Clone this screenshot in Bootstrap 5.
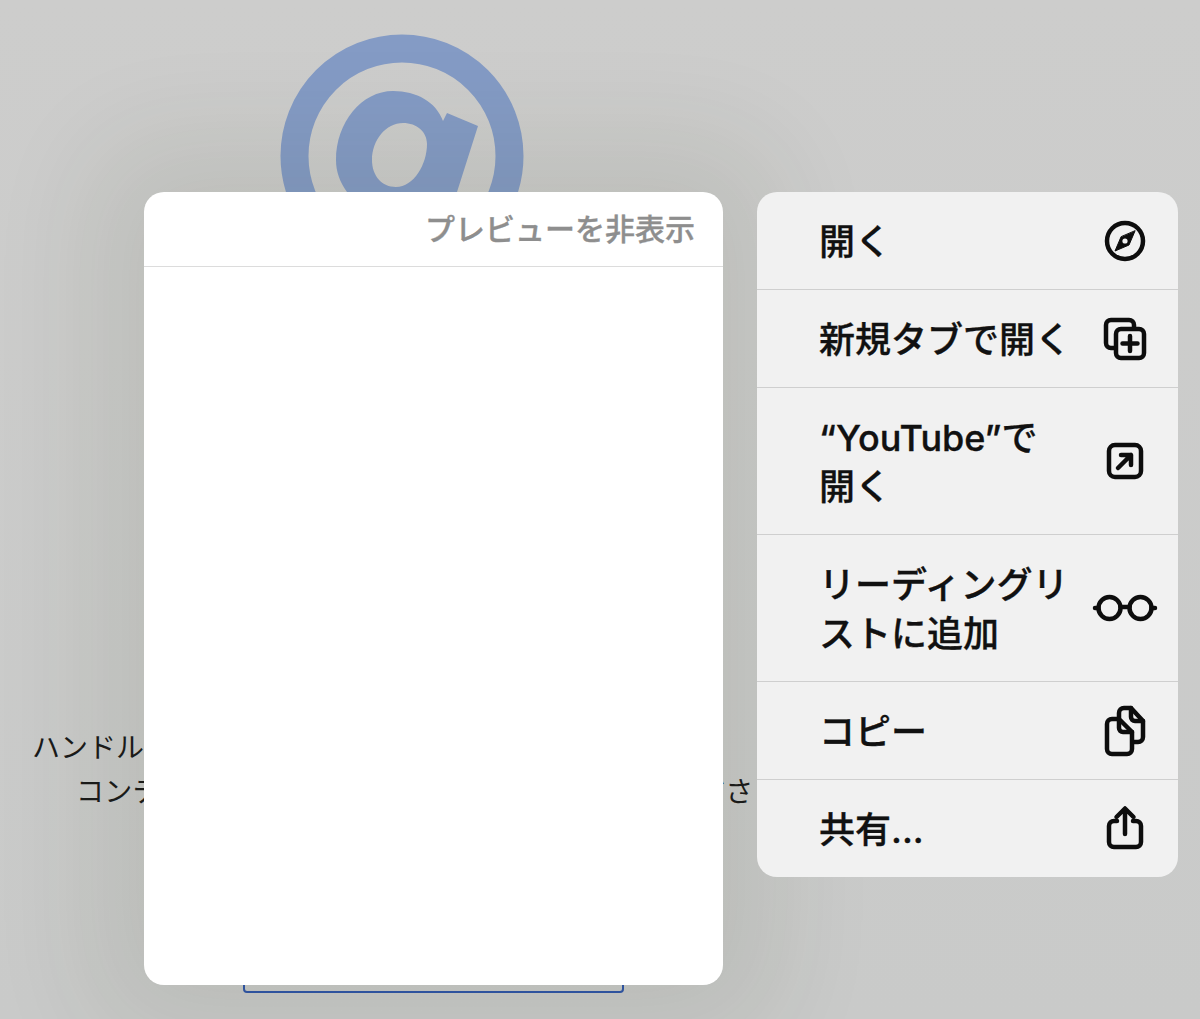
<!DOCTYPE html>
<html lang="ja">
<head>
<meta charset="utf-8">
<link href="https://cdn.jsdelivr.net/npm/bootstrap@5.3.0/dist/css/bootstrap.min.css" rel="stylesheet">
<style>
html,body{margin:0;height:100%;overflow:hidden}
body{font-family:"Noto Sans CJK JP","Liberation Sans",sans-serif;color:#111;background:#cbcbca}
.stage{position:relative;width:1200px;height:1019px;overflow:hidden;background:linear-gradient(#cdcdcc,#c9cac9)}
.at-mark{display:block;margin:34px 0 0 280px}
.bg-copy{position:absolute;left:0;top:724px;width:100%;font-size:28px;line-height:44px;color:#1a1a1a;white-space:nowrap}
.bg-copy div:first-child{padding-left:32px}
.bg-copy div:last-child{padding-left:76px;letter-spacing:.3px}
.field-line{position:absolute;left:243px;top:960px;width:381px;height:33px;border:2px solid #2f55a8;border-radius:4px}
.preview{position:absolute;left:144px;top:192px;width:579px;height:793px;border:0;border-radius:20px;background:#fff;box-shadow:0 0 110px 50px rgba(40,50,20,.09)}
.preview-head{height:75px;padding:0 28px 3px 0;font-size:30px;font-weight:500;-webkit-text-stroke:.35px #8e8e8e;color:#8e8e8e;border-bottom:1px solid #dcdcdc;background:transparent}
.action-menu{position:absolute;left:757px;top:192px;width:421px;border-radius:20px;background:#f1f1f1;overflow:hidden}
.action-menu .list-group-item{position:relative;background:transparent;border:0;border-bottom:1px solid #cfcfcf;color:#111;padding:3px 0 0 62px;display:flex;align-items:center;font-family:Inter,"Noto Sans CJK JP",sans-serif;font-size:36px;line-height:49px;font-weight:500;-webkit-text-stroke:.35px #111}
.action-menu .list-group-item:last-child{border-bottom:0;height:97px}
.row-one{height:98px}
.row-two{height:147px}
.row-label{width:256px}
.row-icon{position:absolute;right:23px;width:60px;display:flex;justify-content:center;top:50%;transform:translateY(-50%)}
.action-menu svg{fill:none;stroke:#0d0d0d;stroke-width:4.500;stroke-linecap:round;stroke-linejoin:round;display:block;overflow:visible}
</style>
</head>
<body>
<div class="stage">
 <svg class="at-mark" width="244" height="158" viewBox="0 0 244 158">
  <circle cx="122" cy="122" r="107.500" fill="none" stroke="#849bc5" stroke-width="28"/>
  <path fill="#849bc5" fill-rule="evenodd" d="M67 158C60 148 56 138 56 126C56 88 82 57 113 57C137 57 156 68 163 87L167 79L198 92L177 158ZM123 89C137 89 147 98 147 110C147 130 134 153 116 153C102 153 92 142 92 126C92 106 106 89 123 89Z"/>
 </svg>
 <div class="bg-copy">
  <div>ハンドルを選択してチャンネルを作成するか、</div>
  <div>コンテンツを投稿するにはハンドルを作成してくださ</div>
 </div>
 <div class="field-line"></div>

 <div class="card preview">
  <div class="card-header preview-head d-flex align-items-center justify-content-end">プレビューを非表示</div>
 </div>

 <div class="list-group action-menu">
  <div class="list-group-item row-one"><span class="row-label">開く</span><span class="row-icon">
   <svg width="42" height="42" viewBox="0 0 42 42"><circle cx="21" cy="21" r="18"/><path fill="#0d0d0d" stroke-width="1" d="M31 11L25 25L11 31L17 17Z"/><circle cx="21" cy="21" r="2.600" fill="#f1f1f1" stroke="none"/></svg></span></div>
  <div class="list-group-item row-one"><span class="row-label">新規タブで開く</span><span class="row-icon">
   <svg width="42" height="42" viewBox="0 0 42 42"><path d="M10 30H7a5 5 0 0 1-5-5V7a5 5 0 0 1 5-5h18a5 5 0 0 1 5 5v3"/><rect x="12" y="11" width="28" height="29" rx="5"/><path d="M26 18v15M18.500 25.500h15"/></svg></span></div>
  <div class="list-group-item row-two"><span class="row-label">“YouTube”で<br>開く</span><span class="row-icon">
   <svg width="36" height="36" viewBox="0 0 36 36"><rect x="2" y="2" width="32" height="32" rx="6"/><path d="M11 25L24 12M14 12H24V22"/></svg></span></div>
  <div class="list-group-item row-two"><span class="row-label">リーディングリ<br>ストに追加</span><span class="row-icon">
   <svg width="64" height="28" viewBox="0 0 64 28"><circle cx="16.500" cy="14" r="11"/><circle cx="47.500" cy="14" r="11"/><path d="M27.500 13h9M2 14h3.500M58.500 14h3.500"/></svg></span></div>
  <div class="list-group-item row-one"><span class="row-label">コピー</span><span class="row-icon">
   <svg width="40" height="50" viewBox="0 0 40 50"><path d="M14 12V7a5 5 0 0 1 5-5h7l12 13v16a5 5 0 0 1-5 5h-4"/><path d="M26 2v9a4 4 0 0 0 4 4h8"/><path d="M2 18a5 5 0 0 1 5-5h7l13 13v17a5 5 0 0 1-5 5H7a5 5 0 0 1-5-5Z"/><path d="M14 13v9a4 4 0 0 0 4 4h9"/></svg></span></div>
  <div class="list-group-item row-one"><span class="row-label">共有...</span><span class="row-icon">
   <svg width="36" height="46" viewBox="0 0 36 46"><path d="M18 28V3M9.500 11L18 2.500L26.500 11"/><path d="M10 15H7a5 5 0 0 0-5 5v16a5 5 0 0 0 5 5h22a5 5 0 0 0 5-5V20a5 5 0 0 0-5-5h-3"/></svg></span></div>
 </div>
</div>
<script src="https://cdn.jsdelivr.net/npm/bootstrap@5.3.0/dist/js/bootstrap.bundle.min.js"></script>
</body>
</html>
